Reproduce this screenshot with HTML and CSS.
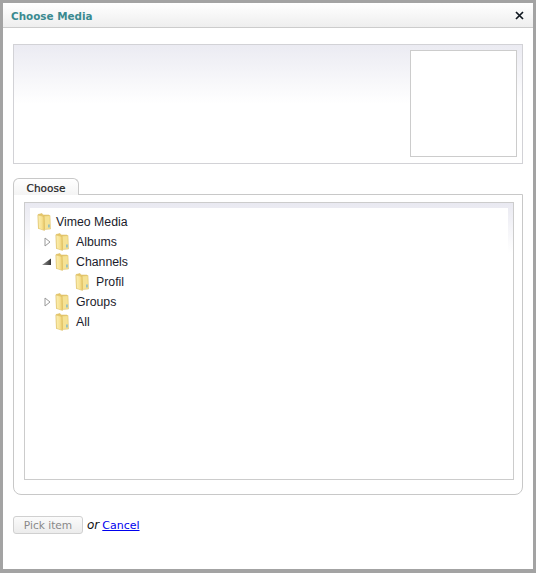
FILE: index.html
```html
<!DOCTYPE html>
<html lang="en">
<head>
  <meta charset="UTF-8" />
  <title>Choose Media</title>
  <link rel="stylesheet" href="styles.css">
</head>
<body>
  <svg class="defs" width="0" height="0">
    <defs>
      <linearGradient id="folderFill" x1="0" y1="0" x2="1" y2="0">
        <stop offset="0" stop-color="#fbf0b4" />
        <stop offset="0.6" stop-color="#f7e192" />
        <stop offset="1" stop-color="#e6c766" />
      </linearGradient>
      <symbol id="folder" viewBox="0 0 14 18">
        <path d="M1 1.5 L5 0.5 L6 2 L12 2 L12.5 15.5 L1.5 15.5 Z" fill="#e6c86c" stroke="#d8b85c" stroke-width="0.5" />
        <path d="M7 3 L13 2.5 L13.5 16 L7.5 16.5 Z" fill="#f5e294" stroke="#dcbc62" stroke-width="0.5" />
        <path d="M1 2 L7 3.5 L7.5 17.5 L1.5 15.5 Z" fill="url(#folderFill)" stroke="#dcbc62" stroke-width="0.5" />
        <rect x="11.4" y="11.5" width="1.1" height="3" fill="#5aa9dc" />
      </symbol>
      <linearGradient id="arrowFill" x1="0" y1="0" x2="1" y2="0">
        <stop offset="0" stop-color="#999" />
        <stop offset="1" stop-color="#333" />
      </linearGradient>
    </defs>
  </svg>

  <div class="dialog">
    <div class="titlebar">
      <span class="title">Choose Media</span>
      <svg class="close" width="9" height="9" viewBox="0 0 9 9">
        <path d="M1 1 L8 8 M8 1 L1 8" stroke="#101820" stroke-width="1.7" />
      </svg>
    </div>

    <div class="content">
      <div class="preview">
        <div class="thumb"></div>
      </div>

      <div class="tabs">
        <div class="tab">Choose</div>
      </div>
      <div class="panel">
        <div class="tree-frame">
          <ul class="tree">
            <li class="node">
              <svg class="folder"><use href="#folder" /></svg>Vimeo Media
            </li>
            <li class="node depth-1">
              <svg class="arrow" viewBox="0 0 7 10"><path d="M1 1 L6 5 L1 9 Z" fill="#fff" stroke="#9a9a9a" /></svg>
              <svg class="folder"><use href="#folder" /></svg>Albums
            </li>
            <li class="node depth-1 open">
              <svg class="arrow" viewBox="0 0 7 10"><path d="M-2 8 L7 8 L7 1.5 Z" fill="url(#arrowFill)" /></svg>
              <svg class="folder"><use href="#folder" /></svg>Channels
            </li>
            <li class="node depth-2">
              <svg class="folder"><use href="#folder" /></svg>Profil
            </li>
            <li class="node depth-1">
              <svg class="arrow" viewBox="0 0 7 10"><path d="M1 1 L6 5 L1 9 Z" fill="#fff" stroke="#9a9a9a" /></svg>
              <svg class="folder"><use href="#folder" /></svg>Groups
            </li>
            <li class="node depth-1 no-arrow">
              <svg class="folder"><use href="#folder" /></svg>All
            </li>
          </ul>
        </div>
      </div>

      <div class="actions">
        <button class="pick" disabled>Pick item</button>
        <em>or</em>
        <a href="#">Cancel</a>
      </div>
    </div>
  </div>
</body>
</html>
```

FILE: styles.css
```css
* {
  box-sizing: border-box;
  margin: 0;
  padding: 0;
}

html, body {
  height: 100%;
}

body {
  background: #a3a3a3;
  padding: 3px 3px 4px 3px;
  font-family: 'Liberation Sans', Arial, sans-serif;
  font-size: 12px;
  color: #222;
  overflow: hidden;
}

.defs {
  display: block;
  height: 0;
}

.dialog {
  height: 566px;
  background: #fff;
}

.titlebar {
  height: 25px;
  padding: 1px 9px 0 8px;
  display: flex;
  align-items: center;
  justify-content: space-between;
  background: linear-gradient(#ffffff, #eeeeee);
  border-bottom: 1px solid #cccccc;
}

.title {
  font-family: 'DejaVu Sans', sans-serif;
  font-size: 10.4px;
  font-weight: bold;
  color: #3a8a90;
}

.close {
  display: block;
}

.content {
  padding: 16px 10px 0 10px;
}

.preview {
  height: 120px;
  padding: 5px;
  display: flex;
  justify-content: flex-end;
  border: 1px solid #d2d2d6;
  background: linear-gradient(#ebebf2, #ffffff 50%);
}

.thumb {
  width: 107px;
  height: 107px;
  background: #fff;
  border: 1px solid #cccccc;
}

.tabs {
  margin-top: 14px;
  height: 17px;
  display: flex;
  position: relative;
  z-index: 1;
}

.tab {
  width: 66px;
  height: 17px;
  border: 1px solid #c8c8c8;
  border-bottom: none;
  border-radius: 6px 6px 0 0;
  background: linear-gradient(#ffffff, #f4f4f4);
  font-family: 'DejaVu Sans', sans-serif;
  font-size: 10.5px;
  color: #222;
  line-height: 18px;
  text-align: center;
  -webkit-text-stroke: 0.2px #222;
}

.panel {
  height: 301px;
  margin-top: -1px;
  padding: 7px 8px 14px 10px;
  border: 1px solid #c8c8c8;
  border-radius: 0 0 8px 8px;
  background: #fff;
}

.tree-frame {
  height: 100%;
  padding: 5px;
  border: 1px solid #cccccc;
  background: linear-gradient(#e9e9f1, #ffffff 50px);
}

.tree {
  list-style: none;
  height: 100%;
  background: #fff;
  padding-top: 4px;
  font-size: 12.3px;
  color: #1c1c2c;
}

.node {
  height: 20px;
  display: flex;
  align-items: center;
  padding-left: 7px;
}

.node.depth-1 {
  padding-left: 14px;
}

.node.depth-1.no-arrow {
  padding-left: 25px;
}

.node.depth-2 {
  padding-left: 45px;
}

.arrow {
  width: 7px;
  height: 10px;
  margin-right: 4px;
  flex: none;
  overflow: visible;
}

.folder {
  width: 14px;
  height: 18px;
  margin-right: 5px;
  flex: none;
}

.depth-1 .folder,
.depth-2 .folder {
  margin-right: 7px;
}

.actions {
  margin-top: 21px;
  display: flex;
  align-items: center;
  gap: 4px;
  font-family: 'DejaVu Sans', sans-serif;
  font-size: 11px;
}

.pick {
  width: 70px;
  height: 18px;
  border: 1px solid #d0d0d0;
  border-radius: 3px;
  background: linear-gradient(#fbfbfb, #ececec);
  font-family: 'DejaVu Sans', sans-serif;
  font-size: 10.6px;
  color: #888;
}

.actions em {
  color: #111;
  font-size: 12px;
  margin-right: -1px;
}

.actions a {
  color: #0000ee;
}
```
